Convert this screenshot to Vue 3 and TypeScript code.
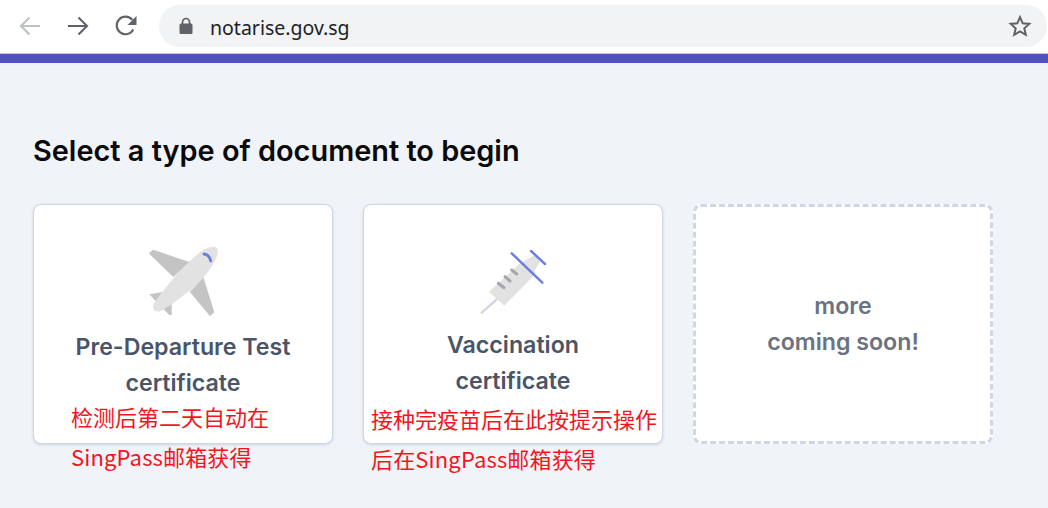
<script setup lang="ts">
interface Card { lines: string[]; kind: 'plane' | 'syringe'; note: string[]; }
const cards: Card[] = [
  { lines: ['Pre-Departure Test', 'certificate'], kind: 'plane', note: ['检测后第二天自动在', 'SingPass邮箱获得'] },
  { lines: ['Vaccination', 'certificate'], kind: 'syringe', note: ['接种完疫苗后在此按提示操作', '后在SingPass邮箱获得'] },
];
</script>

<template>
  <div class="page">
    <header class="bar">
      <div class="nav">
        <svg width="24" height="24" viewBox="0 0 24 24" fill="none" stroke="#bdc1c6" stroke-width="2.1">
          <path d="M22 12H3M11.500 3.500 3 12l8.500 8.500" />
        </svg>
        <svg width="24" height="24" viewBox="0 0 24 24" fill="none" stroke="#5f6368" stroke-width="2.1">
          <path d="M2 12h19M12.500 3.500 21 12l-8.500 8.500" />
        </svg>
        <svg width="24" height="24" viewBox="0 0 24 24" fill="none">
          <path d="M19.300 15.500A8.800 8.800 0 1 1 18.300 5.800" stroke="#5f6368" stroke-width="2.100" />
          <path d="M22.500 2v9h-9z" fill="#5f6368" />
        </svg>
      </div>
      <div class="omni">
        <svg width="14" height="18" viewBox="0 0 14 18">
          <path d="M3.500 7V5a3.500 3.500 0 0 1 7 0v2" fill="none" stroke="#5f6368" stroke-width="1.700" />
          <rect x="0.500" y="6.500" width="13" height="10.500" rx="1.500" fill="#5f6368" />
        </svg>
        <span class="url">notarise.gov.sg</span>
        <svg width="24" height="24" viewBox="0 0 24 24" fill="none" stroke="#5f6368" stroke-width="2">
          <path d="M12 3.200l2.700 6.100 6.600.6-5 4.400 1.500 6.500L12 17.400l-5.800 3.400 1.500-6.500-5-4.400 6.600-.6z" />
        </svg>
      </div>
    </header>
    <div class="stripe"></div>
    <main class="content">
      <h1>Select a type of document to begin</h1>
      <div class="cards">
        <div v-for="c in cards" :key="c.kind" class="card">
          <svg v-if="c.kind === 'plane'" class="art" width="80" height="80" viewBox="0 0 80 80">
            <path d="M6 12.300 10.300 9 46.300 21.300 30.300 35.700zM47 50.700 60.300 36.700 71 71.300 67 74.700z" fill="#c4c4c4" stroke="#c4c4c4" stroke-width="0.600" stroke-linejoin="round" />
            <path d="M6.300 53.300 18.700 51.300 28.700 62.300 28.700 74 26.300 74 20.300 68z" fill="#c4c4c4" />
            <path d="M10.500 63C16 55 30 36 46 21 52 15 60 8 66 6.500 71 5 75 6 75 10 75 16 68 28 60 37 50 48 30 63 18 70 14 72 8 69 10.500 63z" fill="#e2e2e2" />
            <path d="M61 13C64.500 13.500 67 16.500 67.700 20" fill="none" stroke="#6a7fe0" stroke-width="2.800" stroke-linecap="round" />
          </svg>
          <svg v-else class="art art-syringe" width="80" height="80" viewBox="0 0 80 80">
            <path d="M8.700 71.700 23.700 58.300" stroke="#ced6e4" stroke-width="2.400" stroke-linecap="round" />
            <path d="M16 50.700 47 22.300 56 17.300 61.300 14 67 20.700 62 29 61.300 34 31.300 64.700z" fill="#e2e2e2" />
            <path d="M25.300 42.300 31 46.700M32 35.700 37 40M38.700 29 43.700 33" stroke="#a3a6ab" stroke-width="3" stroke-linecap="round" />
            <path d="M38.700 12.300 69.300 41.700M58 10 72 23" stroke="#6a7fe0" stroke-width="2.400" stroke-linecap="round" />
          </svg>
          <p class="label">
            <span v-for="l in c.lines" :key="l" class="line">{{ l }}</span>
          </p>
          <div class="note">
            <span v-for="n in c.note" :key="n" class="line">{{ n }}</span>
          </div>
        </div>
        <div class="card soon">
          <p class="soon-text"><span class="line">more</span><span class="line">coming soon!</span></p>
        </div>
      </div>
    </main>
  </div>
</template>

<style>
html, body { margin: 0; padding: 0; background: #f0f4f9; }
</style>

<style scoped>
.page {
  width: 1048px;
  height: 508px;
  overflow: hidden;
  background: #f0f4f9;
  font-family: Inter, "Noto Sans CJK SC", sans-serif;
}
.bar {
  height: 54px;
  box-sizing: border-box;
  background: #fff;
  display: flex;
  align-items: flex-start;
  padding: 5px 0 0 18px;
  border-bottom: 1px solid #c5c6e8;
}
.nav { display: flex; gap: 24px; padding-top: 9px; }
.omni {
  margin: 0 1px 0 21px;
  flex: 1;
  height: 42px;
  background: #f1f3f4;
  border-radius: 21px;
  display: flex;
  align-items: center;
  padding: 0 15px 0 20px;
}
.url {
  margin: 2px 0 0 17px;
  font-family: "Noto Sans", "Open Sans", sans-serif;
  font-size: 19.5px;
  color: #202124;
  flex: 1;
}
.stripe { height: 9px; background: #4f52bf; }
.content { padding: 70px 0 0 33px; }
h1 {
  margin: 0;
  height: 36px;
  line-height: 36px;
  font-size: 28.9px;
  font-weight: 600;
  color: #0a0a0a;
}
.cards { display: flex; gap: 30px; margin-top: 35px; }
.card {
  width: 300px;
  height: 240px;
  box-sizing: border-box;
  background: #fff;
  border-radius: 8px;
  border: 1px solid #cfd6e4;
  box-shadow: 0 1px 3px rgba(100, 116, 139, 0.25);
  position: relative;
  display: flex;
  flex-direction: column;
  align-items: center;
}
.art { display: block; margin-top: 36px; flex: none; }
.label {
  margin: 8px 0 0;
  text-align: center;
  font-size: 23.2px;
  font-weight: 600;
  line-height: 36px;
  color: #4a5568;
}
.art-syringe + .label { margin-top: 6px; }
.line { display: block; white-space: nowrap; }
.note {
  position: absolute;
  left: 37px;
  top: 191px;
  font-family: "Noto Sans CJK SC", sans-serif;
  font-size: 22px;
  line-height: 40px;
  color: #f5141e;
}
.note .line:nth-child(2) { letter-spacing: 0.15px; }
.art-syringe ~ .note { left: 7px; top: 193px; }
.soon {
  border: 3px dashed #cfd6e4;
  box-shadow: none;
  justify-content: center;
}
.soon-text {
  margin: 0;
  text-align: center;
  font-size: 23.2px;
  font-weight: 600;
  line-height: 36px;
  color: #6b7280;
}
</style>
